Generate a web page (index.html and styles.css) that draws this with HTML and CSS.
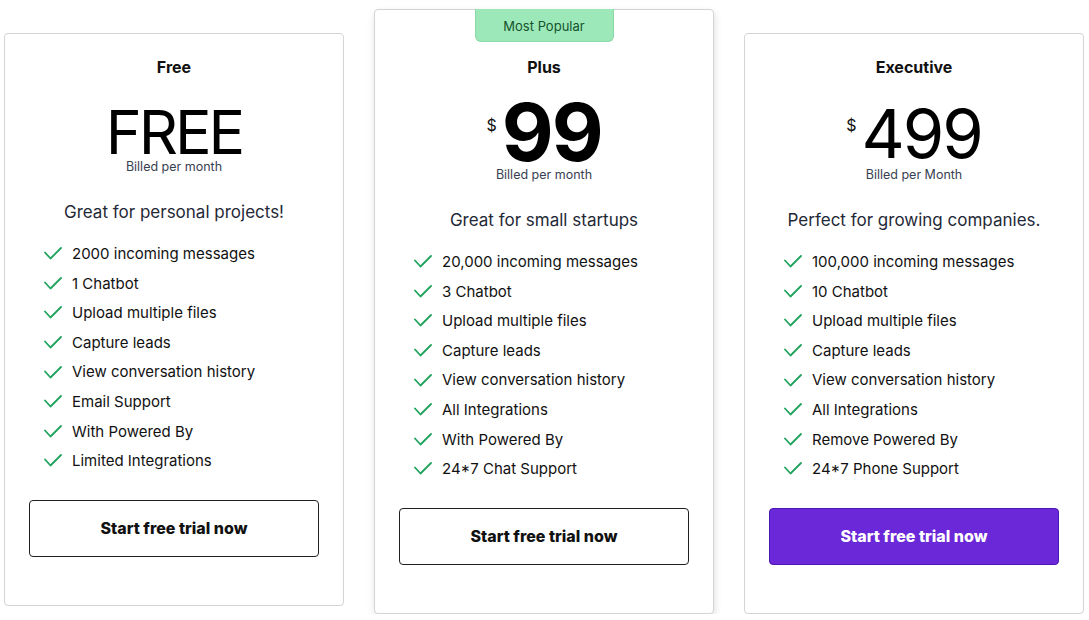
FILE: index.html
```html
<!DOCTYPE html>
<html lang="en">
<head>
<meta charset="utf-8">
<title>Pricing</title>
<link rel="stylesheet" href="styles.css">
</head>
<body>
<main class="plans">
  <section class="card">
    <h2 class="plan-name">Free</h2>
    <div class="price-row price-row--free">
      <span class="amount amount--free">FREE</span>
    </div>
    <p class="billed">Billed per month</p>
    <p class="tagline">Great for personal projects!</p>
    <ul class="features">
      <li><svg class="check" viewBox="0 0 18 13"><polyline points="1,5.5 6.5,11.5 17,1"/></svg>2000 incoming messages</li>
      <li><svg class="check" viewBox="0 0 18 13"><polyline points="1,5.5 6.5,11.5 17,1"/></svg>1 Chatbot</li>
      <li><svg class="check" viewBox="0 0 18 13"><polyline points="1,5.5 6.5,11.5 17,1"/></svg>Upload multiple files</li>
      <li><svg class="check" viewBox="0 0 18 13"><polyline points="1,5.5 6.5,11.5 17,1"/></svg>Capture leads</li>
      <li><svg class="check" viewBox="0 0 18 13"><polyline points="1,5.5 6.5,11.5 17,1"/></svg>View conversation history</li>
      <li><svg class="check" viewBox="0 0 18 13"><polyline points="1,5.5 6.5,11.5 17,1"/></svg>Email Support</li>
      <li><svg class="check" viewBox="0 0 18 13"><polyline points="1,5.5 6.5,11.5 17,1"/></svg>With Powered By</li>
      <li><svg class="check" viewBox="0 0 18 13"><polyline points="1,5.5 6.5,11.5 17,1"/></svg>Limited Integrations</li>
    </ul>
    <button class="cta">Start free trial now</button>
  </section>

  <section class="card card--popular">
    <div class="badge">Most Popular</div>
    <h2 class="plan-name">Plus</h2>
    <div class="price-row">
      <span class="currency">$</span>
      <span class="amount amount--bold">99</span>
    </div>
    <p class="billed">Billed per month</p>
    <p class="tagline">Great for small startups</p>
    <ul class="features">
      <li><svg class="check" viewBox="0 0 18 13"><polyline points="1,5.5 6.5,11.5 17,1"/></svg>20,000 incoming messages</li>
      <li><svg class="check" viewBox="0 0 18 13"><polyline points="1,5.5 6.5,11.5 17,1"/></svg>3 Chatbot</li>
      <li><svg class="check" viewBox="0 0 18 13"><polyline points="1,5.5 6.5,11.5 17,1"/></svg>Upload multiple files</li>
      <li><svg class="check" viewBox="0 0 18 13"><polyline points="1,5.5 6.5,11.5 17,1"/></svg>Capture leads</li>
      <li><svg class="check" viewBox="0 0 18 13"><polyline points="1,5.5 6.5,11.5 17,1"/></svg>View conversation history</li>
      <li><svg class="check" viewBox="0 0 18 13"><polyline points="1,5.5 6.5,11.5 17,1"/></svg>All Integrations</li>
      <li><svg class="check" viewBox="0 0 18 13"><polyline points="1,5.5 6.5,11.5 17,1"/></svg>With Powered By</li>
      <li><svg class="check" viewBox="0 0 18 13"><polyline points="1,5.5 6.5,11.5 17,1"/></svg>24*7 Chat Support</li>
    </ul>
    <button class="cta">Start free trial now</button>
  </section>

  <section class="card">
    <h2 class="plan-name">Executive</h2>
    <div class="price-row">
      <span class="currency">$</span>
      <span class="amount amount--regular">499</span>
    </div>
    <p class="billed">Billed per Month</p>
    <p class="tagline">Perfect for growing companies.</p>
    <ul class="features">
      <li><svg class="check" viewBox="0 0 18 13"><polyline points="1,5.5 6.5,11.5 17,1"/></svg>100,000 incoming messages</li>
      <li><svg class="check" viewBox="0 0 18 13"><polyline points="1,5.5 6.5,11.5 17,1"/></svg>10 Chatbot</li>
      <li><svg class="check" viewBox="0 0 18 13"><polyline points="1,5.5 6.5,11.5 17,1"/></svg>Upload multiple files</li>
      <li><svg class="check" viewBox="0 0 18 13"><polyline points="1,5.5 6.5,11.5 17,1"/></svg>Capture leads</li>
      <li><svg class="check" viewBox="0 0 18 13"><polyline points="1,5.5 6.5,11.5 17,1"/></svg>View conversation history</li>
      <li><svg class="check" viewBox="0 0 18 13"><polyline points="1,5.5 6.5,11.5 17,1"/></svg>All Integrations</li>
      <li><svg class="check" viewBox="0 0 18 13"><polyline points="1,5.5 6.5,11.5 17,1"/></svg>Remove Powered By</li>
      <li><svg class="check" viewBox="0 0 18 13"><polyline points="1,5.5 6.5,11.5 17,1"/></svg>24*7 Phone Support</li>
    </ul>
    <button class="cta cta--primary">Start free trial now</button>
  </section>
</main>
</body>
</html>
```

FILE: styles.css
```css
* { box-sizing: border-box; }

html, body {
  margin: 0;
  padding: 0;
  background: #ffffff;
}

body {
  font-family: Inter, "Open Sans", "Liberation Sans", sans-serif;
  color: #111111;
}

.plans {
  display: flex;
  align-items: flex-start;
  gap: 30px;
  padding: 9px 0 0 4px;
}

.card {
  width: 340px;
  margin-top: 24px;
  padding: 21px 24px 48px;
  border: 1px solid #d4d4d4;
  border-radius: 4px;
  background: #ffffff;
  display: flex;
  flex-direction: column;
}

.card--popular {
  margin-top: 0;
  padding-top: 0;
  box-shadow: 0 4px 10px rgba(0, 0, 0, 0.08), 2px 2px 6px rgba(0, 0, 0, 0.05);
}

.badge {
  align-self: center;
  width: 139px;
  height: 33px;
  margin-top: -1px;
  margin-bottom: 13px;
  padding-top: 2px;
  background: #9de8b8;
  border: 1px solid #8ad8a6;
  border-top: none;
  border-radius: 0 0 6px 6px;
  color: #14532d;
  font-size: 13px;
  line-height: 31px;
  text-align: center;
}

.plan-name {
  margin: 0;
  font-size: 16px;
  line-height: 24px;
  font-weight: 700;
  text-align: center;
}

.price-row {
  display: flex;
  justify-content: center;
  align-items: flex-start;
  height: 63px;
  margin-top: 25px;
}

.price-row--free {
  height: 55px;
}

.amount {
  color: #000000;
}

.amount--free {
  font-size: 61px;
  line-height: 55px;
  font-weight: 400;
  letter-spacing: -3px;
  margin-top: 1px;
}

.amount--regular {
  font-size: 67px;
  line-height: 59px;
  font-weight: 400;
  letter-spacing: -2px;
}

.amount--bold {
  font-size: 80px;
  line-height: 56px;
  font-weight: 700;
  letter-spacing: -2px;
}

.currency {
  font-size: 16px;
  line-height: 16px;
  margin-top: 13px;
  margin-right: 5px;
  color: #111111;
}

.billed {
  margin: 0;
  font-size: 12.5px;
  line-height: 16px;
  color: #374151;
  text-align: center;
}

.tagline {
  margin: 24px 0 0;
  font-size: 17px;
  line-height: 26px;
  color: #1f2937;
  text-align: center;
}

.features {
  list-style: none;
  margin: 14px 0 0;
  padding: 0 0 0 15px;
}

.features li {
  display: flex;
  align-items: center;
  gap: 10px;
  font-size: 15px;
  line-height: 29.6px;
  color: #111111;
}

.check {
  width: 18px;
  height: 13px;
  flex: none;
  fill: none;
  stroke: #1fa35d;
  stroke-width: 1.8;
  stroke-linecap: round;
  stroke-linejoin: round;
}

.cta {
  margin-top: 24px;
  width: 100%;
  height: 57px;
  border: 1px solid #1f1f1f;
  border-radius: 4px;
  background: #ffffff;
  color: #111111;
  font-family: inherit;
  font-size: 16px;
  font-weight: 800;
  cursor: pointer;
}

.cta--primary {
  background: #6a28d8;
  border-color: #4a17b0;
  color: #ffffff;
}
```
